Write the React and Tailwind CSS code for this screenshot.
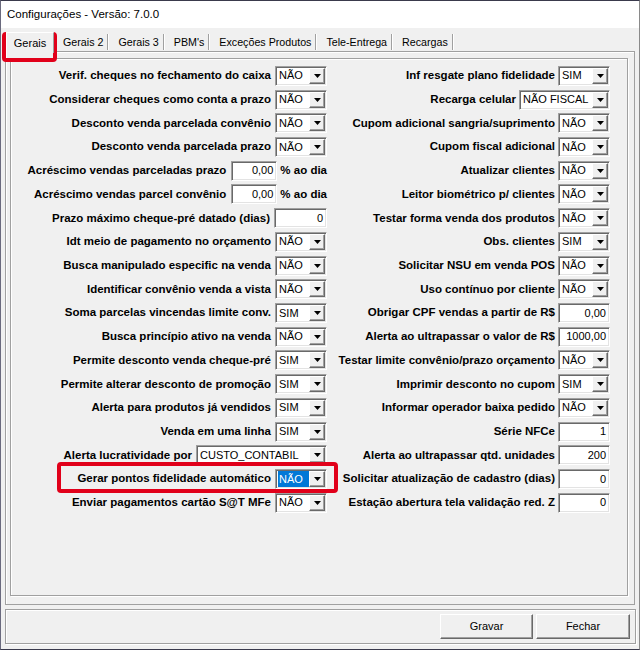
import React from 'react';

const LEFT = [
  ['Verif. cheques no fechamento do caixa', 'combo', 'NÃO'],
  ['Considerar cheques como conta a prazo', 'combo', 'NÃO'],
  ['Desconto venda parcelada convênio', 'combo', 'NÃO'],
  ['Desconto venda parcelada prazo', 'combo', 'NÃO'],
  ['Acréscimo vendas parceladas prazo', 'pct', '0,00'],
  ['Acréscimo vendas parcel convênio', 'pct', '0,00'],
  ['Prazo máximo cheque-pré datado (dias)', 'input', '0', 'w-[53px]'],
  ['Idt meio de pagamento no orçamento', 'combo', 'NÃO'],
  ['Busca manipulado especific na venda', 'combo', 'NÃO'],
  ['Identificar convênio venda a vista', 'combo', 'NÃO'],
  ['Soma parcelas vincendas limite conv.', 'combo', 'SIM'],
  ['Busca princípio ativo na venda', 'combo', 'NÃO'],
  ['Permite desconto venda cheque-pré', 'combo', 'SIM'],
  ['Permite alterar desconto de promoção', 'combo', 'SIM'],
  ['Alerta para produtos já vendidos', 'combo', 'SIM'],
  ['Venda em uma linha', 'combo', 'SIM'],
  ['Alerta lucratividade por', 'combo', 'CUSTO_CONTABIL', 'w-[131px]'],
  ['Gerar pontos fidelidade automático', 'selected', 'NÃO'],
  ['Enviar pagamentos cartão S@T MFe', 'combo', 'NÃO'],
];

const RIGHT = [
  ['Inf resgate plano fidelidade', 'combo', 'SIM'],
  ['Recarga celular', 'combo', 'NÃO FISCAL', 'w-[91px]'],
  ['Cupom adicional sangria/suprimento', 'combo', 'NÃO'],
  ['Cupom fiscal adicional', 'combo', 'NÃO'],
  ['Atualizar clientes', 'combo', 'NÃO'],
  ['Leitor biométrico p/ clientes', 'combo', 'NÃO'],
  ['Testar forma venda dos produtos', 'combo', 'NÃO'],
  ['Obs. clientes', 'combo', 'SIM'],
  ['Solicitar NSU em venda POS', 'combo', 'NÃO'],
  ['Uso contínuo por cliente', 'combo', 'NÃO'],
  ['Obrigar CPF vendas a partir de R$', 'input', '0,00'],
  ['Alerta ao ultrapassar o valor de R$', 'input', '1000,00'],
  ['Testar limite convênio/prazo orçamento', 'combo', 'NÃO'],
  ['Imprimir desconto no cupom', 'combo', 'SIM'],
  ['Informar operador baixa pedido', 'combo', 'NÃO'],
  ['Série NFCe', 'input', '1'],
  ['Alerta ao ultrapassar qtd. unidades', 'input', '200'],
  ['Solicitar atualização de cadastro (dias)', 'input', '0'],
  ['Estação abertura tela validação red. Z', 'input', '0'],
];

const TABS = ['Gerais 2', 'Gerais 3', "PBM's", 'Exceções Produtos', 'Tele-Entrega', 'Recargas'];

const sunken =
  'border border-t-[#a0a0a0] border-l-[#a0a0a0] border-r-white border-b-white shadow-[inset_1px_1px_0_#696969,inset_-1px_-1px_0_#e3e3e3] bg-white';

function Combo({ value, w = 'w-[52px]', selected }) {
  return (
    <div className={`flex h-[20px] shrink-0 items-center ${w} ${sunken}`}>
      <div className="flex min-w-0 flex-1 items-center pl-[2px]">
        <span
          className={
            selected
              ? 'flex h-[16px] flex-1 items-center bg-[#0078d7] pl-[1px] text-[11px] leading-none text-white'
              : 'pl-[1px] text-[11px] leading-none'
          }
        >
          {value}
        </span>
      </div>
      <div className="mr-[1px] flex h-[16px] w-[16px] items-center justify-center border border-t-white border-l-white border-r-[#696969] border-b-[#696969] bg-[#f0f0f0] shadow-[inset_-1px_-1px_0_#a0a0a0]">
        <svg width="7" height="4" viewBox="0 0 7 4">
          <polygon points="0,0 7,0 3.5,4" fill="#000" />
        </svg>
      </div>
    </div>
  );
}

function Field({ value, w = 'w-[52px]' }) {
  return (
    <div className={`flex h-[20px] shrink-0 items-center justify-end pr-[3px] text-[11px] leading-none ${w} ${sunken}`}>
      {value}
    </div>
  );
}

function Row({ row, gap }) {
  const [label, kind, value, w] = row;
  return (
    <div className="flex h-[23.72px] items-center justify-end whitespace-nowrap">
      <span className={`text-[11.5px] font-bold ${gap}`}>{label}</span>
      {kind === 'combo' && <Combo value={value} w={w} />}
      {kind === 'selected' && <Combo value={value} w={w} selected />}
      {kind === 'input' && <Field value={value} w={w} />}
      {kind === 'pct' && (
        <>
          <Field value={value} w="w-[46px]" />
          <span className="ml-[3px] text-[11.5px] font-bold">% ao dia</span>
        </>
      )}
    </div>
  );
}

export default function App() {
  return (
    <div className="relative flex h-[650px] w-[640px] flex-col overflow-hidden border border-t-[#3a3a4c] border-l-[#6a6a7e] border-r-[#8a8a8a] border-b-[#3a3a4c] bg-[#f0f0f0] font-['Liberation_Sans',Arial,sans-serif] text-black">
      {/* title bar */}
      <div className="flex h-[27px] shrink-0 items-center bg-white pl-[6px] text-[11.5px]">
        Configurações - Versão: 7.0.0
      </div>

      {/* tabs */}
      <div className="flex h-[23px] shrink-0 items-end pl-[5px]">
        <div className="relative z-10 mb-[-2px] flex h-[21px] w-[48px] items-center justify-center border border-b-0 border-t-white border-l-white border-r-[#a0a0a0] bg-[#f0f0f0] text-[11px]">
          Gerais
        </div>
        {TABS.map(t => (
          <div key={t} className="flex h-[18px] items-center">
            <span className="pl-[9px] pr-[4px] text-[10.7px]">{t}</span>
            <span className="h-[16px] w-[2px] border-l border-r border-l-[#a0a0a0] border-r-white" />
          </div>
        ))}
      </div>

      {/* tab page */}
      <div className="ml-[4px] h-[554px] w-[630px] shrink-0 border border-[#a0a0a0] shadow-[inset_1px_1px_0_#fff]">
        <div className="ml-[4px] mt-[6px] flex h-[538px] w-[618px] border border-[#a0a0a0] pt-[5px] shadow-[inset_1px_1px_0_#fff,1px_1px_0_#fff]">
          <div className="w-[316px]">
            {LEFT.map(r => (
              <Row key={r[0]} row={r} gap={r[1] === 'pct' ? 'mr-[5px]' : 'mr-[4px]'} />
            ))}
          </div>
          <div className="w-[283px]">
            {RIGHT.map(r => (
              <Row key={r[0]} row={r} gap="mr-[3px]" />
            ))}
          </div>
        </div>
      </div>

      {/* bottom bar */}
      <div className="ml-[4px] mt-[4px] flex h-[35px] w-[631px] shrink-0 items-center justify-end gap-[3px] border border-[#a0a0a0] pr-[5px] shadow-[inset_1px_1px_0_#fff,1px_1px_0_#fff]">
        <button className="h-[25px] w-[93px] border border-t-white border-l-white border-r-[#696969] border-b-[#696969] bg-[#f0f0f0] text-[11px] shadow-[inset_-1px_-1px_0_#a0a0a0]">
          Gravar
        </button>
        <button className="h-[25px] w-[94px] border border-t-white border-l-white border-r-[#696969] border-b-[#696969] bg-[#f0f0f0] text-[11px] shadow-[inset_-1px_-1px_0_#a0a0a0]">
          Fechar
        </button>
      </div>

      {/* highlight marks */}
      <div className="pointer-events-none absolute left-[1px] top-[31px] h-[30px] w-[55px] rounded-[4px] border-[4px] border-[#e1001a]" />
      <div className="pointer-events-none absolute left-[56px] top-[461px] h-[31px] w-[281px] rounded-[4px] border-[4px] border-[#e1001a]" />
    </div>
  );
}
